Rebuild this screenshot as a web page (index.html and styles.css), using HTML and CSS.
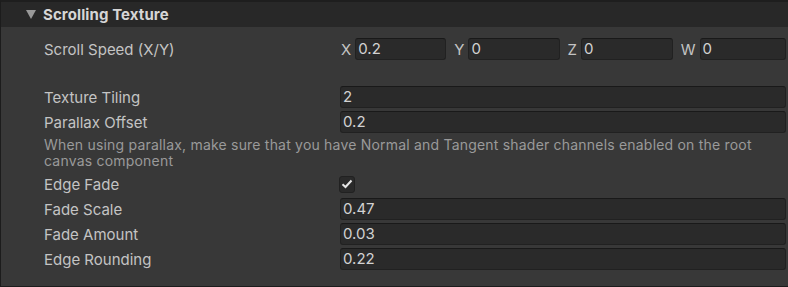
FILE: index.html
```html
<!DOCTYPE html>
<html lang="en">
<head>
    <meta charset="UTF-8">
    <title>Scrolling Texture</title>
    <link rel="stylesheet" href="styles.css">
</head>
<body>
    <div class="panel">
        <div class="header">
            <span class="arrow"></span>
            <span class="title">Scrolling Texture</span>
        </div>
        <div class="content">
            <div class="row">
                <label>Scroll Speed (X/Y)</label>
                <div class="vector">
                    <div class="axis"><span>X</span><div class="field">0.2</div></div>
                    <div class="axis"><span>Y</span><div class="field">0</div></div>
                    <div class="axis"><span>Z</span><div class="field">0</div></div>
                    <div class="axis"><span>W</span><div class="field">0</div></div>
                </div>
            </div>
            <div class="spacer"></div>
            <div class="row">
                <label>Texture Tiling</label>
                <div class="field">2</div>
            </div>
            <div class="row">
                <label>Parallax Offset</label>
                <div class="field">0.2</div>
            </div>
            <p class="help">When using parallax, make sure that you have Normal and Tangent shader channels enabled on the root canvas component</p>
            <div class="row">
                <label>Edge Fade</label>
                <div class="checkbox">
                    <svg width="12" height="10" viewBox="0 0 12 10"><path d="M1.5 5.2 L4.5 8 L10.5 1.5" fill="none" stroke="#e6e6e6" stroke-width="2"/></svg>
                </div>
            </div>
            <div class="row">
                <label>Fade Scale</label>
                <div class="field">0.47</div>
            </div>
            <div class="row">
                <label>Fade Amount</label>
                <div class="field">0.03</div>
            </div>
            <div class="row">
                <label>Edge Rounding</label>
                <div class="field">0.22</div>
            </div>
        </div>
    </div>
</body>
</html>
```

FILE: styles.css
```css
body {
    margin: 0;
    padding: 0;
    background-color: #383838;
    font-family: Inter, "Noto Sans", sans-serif;
    font-size: 15px;
    color: #c4c4c4;
}

.panel {
    width: 788px;
    height: 287px;
    box-sizing: border-box;
    border-top: 2px solid #1e1e1e;
    border-left: 1px solid #1c1c1c;
    border-bottom: 1px solid #1c1c1c;
    background-color: #383838;
}

.header {
    height: 25px;
    background-color: #282828;
    display: flex;
    align-items: center;
}

.arrow {
    width: 0;
    height: 0;
    margin-left: 25px;
    margin-right: 7px;
    border-left: 5px solid transparent;
    border-right: 5px solid transparent;
    border-top: 9px solid #999;
}

.title {
    font-weight: bold;
    color: #d6d6d6;
    letter-spacing: 0.1px;
}

.content {
    display: flex;
    flex-direction: column;
    gap: 3px;
    padding: 11px 2px 0 43px;
}

.row {
    height: 22px;
    display: flex;
    align-items: center;
}

.row label {
    width: 296px;
    flex: 0 0 auto;
}

.spacer {
    height: 20px;
}

.field {
    flex: 1;
    height: 22px;
    box-sizing: border-box;
    background-color: #2a2a2a;
    border: 1px solid #212121;
    border-top-color: #191919;
    border-radius: 3px;
    padding-left: 2px;
    color: #d2d2d2;
    line-height: 20px;
}

.vector {
    flex: 1;
    display: flex;
    gap: 7px;
}

.axis {
    flex: 1;
    display: flex;
    align-items: center;
}

.axis span {
    margin: 0 4px 0 1px;
}

.help {
    margin: 0;
    height: 34px;
    padding-right: 20px;
    font-size: 14px;
    letter-spacing: 0.2px;
    line-height: 16px;
    padding-top: 1px;
    box-sizing: border-box;
    color: #9a9a9a;
}

.checkbox {
    width: 16px;
    height: 17px;
    margin-left: -1px;
    box-sizing: border-box;
    background-color: #2a2a2a;
    border: 1px solid #212121;
    border-radius: 3px;
    display: flex;
    align-items: center;
    justify-content: center;
}
```
